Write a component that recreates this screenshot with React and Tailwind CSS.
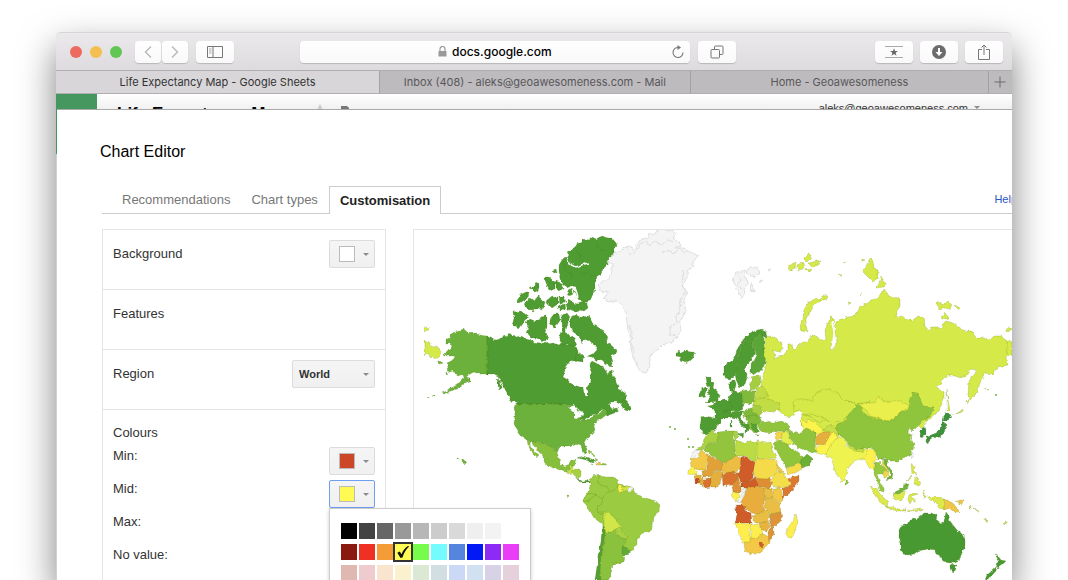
import { useState } from 'react';

const CANADA = '#4f9c32';
const USA = '#6cb13a';
const RUSSIA = '#d5e94a';
const NO_DATA = '#f4f4f4';

// Every entry is a fill colour followed by the outlines drawn with it
const landmasses = [
  // Alaska, Aleutians and Hawaii
  [USA,
    '487,336 480,335 476,334 472,333 467,332 465,330 462,328 460,331 455,332 451,335 449,338 446,340 446,343 449,343 452,346 450,350 446,351 444,354 447,356 453,356 454,359 450,361 447,363 449,366 447,369 449,372 453,371 455,374 458,376 463,374 464,378 460,382 457,385 451,388 447,391 442,393 444,394 450,391 457,389 463,384 467,382 470,381 470,378 466,377 470,374 474,372 479,374 487,374',
    '437,361 440,361 443,363 439,364', '446,372 448,373 446,375', '427,397 430,397 429,398', '432,396 436,396 435,397', '457,458 459,459 457,459', '461,460 463,459 466,462 464,464',
  ],
  // Canadian mainland
  [CANADA,
    '487,336 491,337 495,340 499,339 502,338 504,335 507,336 509,333 512,337 514,335 516,337 521,336 525,338 530,339 534,343 541,344 544,342 549,344 554,343 559,345 562,342 567,345 571,343 573,346 577,349 580,354 583,357 583,362 578,361 573,362 570,361 566,367 564,373 563,377 568,380 570,383 577,386 583,388 584,393 586,397 588,397 588,391 587,387 591,382 590,377 592,371 589,365 592,361 596,363 600,366 603,366 605,371 608,374 610,370 612,371 614,378 618,385 618,389 622,391 626,394 625,399 629,403 631,409 628,411 622,408 622,403 616,402 611,402 608,405 611,409 617,408 619,411 612,414 606,416 604,409 601,410 596,415 590,416 585,420 581,419 580,414 576,409 571,406 563,404 517,404 511,401 508,395 505,389 502,384 498,376 494,374 487,374',
    '622,401 626,401 630,406 631,411 626,409 621,407',
    // Baffin
    '572,316 576,315 580,317 588,316 592,319 594,325 598,327 601,330 606,333 608,338 606,342 611,345 613,347 617,350 615,355 612,354 611,360 613,366 607,365 602,361 596,360 592,357 588,356 594,353 597,350 596,346 591,343 587,339 584,340 582,344 580,337 576,334 572,331 570,325 570,320',
    '576,354 580,353 585,358 581,361 575,360',
    '562,315 567,313 570,317 568,323 566,330 567,334 574,338 577,344 574,347 568,344 562,345 559,338 562,330 561,322',
    // Ellesmere and Axel Heiberg
    '567,258 569,255 567,252 571,250 575,248 577,244 583,242 583,239 588,240 592,237 596,239 602,236 608,238 612,238 615,242 617,246 614,250 614,254 611,257 609,262 606,266 603,269 601,274 597,276 596,281 595,285 595,290 592,295 590,301 584,303 578,299 576,293 573,291 576,287 571,286 567,288 563,285 560,279 559,271 559,265 562,260 565,257',
    '566,304 568,300 573,303 578,304 583,302 587,303 588,308 584,311 579,310 574,312 567,309',
    '567,292 571,289 573,294 568,297', '556,281 561,283 563,289 558,291 556,287', '545,277 549,277 555,282 555,289 549,290 546,284',
    '530,289 534,286 535,283 538,282 538,288 536,292', '553,270 556,269 557,273 554,274',
    '517,301 520,295 526,292 529,292 528,297 523,301 520,303', '524,303 530,298 534,301 539,295 541,299 545,302 543,309 537,308 533,311 527,308 525,306',
    '546,301 552,296 558,297 558,304 552,308 548,304', '559,297 564,297 566,301 560,304', '558,306 564,304 565,310 560,311',
    '513,312 521,311 525,314 529,317 524,322 520,328 517,329 515,326 512,326 514,318',
    '525,323 530,319 535,321 539,320 541,317 547,316 547,326 545,333 549,337 546,341 541,340 536,338 531,338 528,335 526,332 529,329',
    '550,319 554,314 559,314 560,320 557,326 554,328 550,323',
    '497,378 500,381 502,388 499,390 498,385',
  ],
  [USA,
    '517,404 563,404 570,406 574,409 574,418 576,419 581,417 581,420 587,420 594,416 600,413 604,408 607,412 605,416 600,419 596,421 594,426 595,430 592,434 586,439 584,443 587,449 586,454 583,452 581,446 575,444 569,446 564,446 559,448 557,453 552,447 548,447 544,443 532,442 527,440 521,436 517,430 514,424 515,414 514,406',
  ],
  // Mexico and Central America
  ['#86bf3b',
    '527,440 532,442 544,443 548,447 552,447 557,453 559,458 560,464 565,466 570,464 571,461 576,460 574,466 571,467 569,472 561,470 553,468 546,464 543,461 543,456 538,451 534,446 531,442 530,445 534,451 539,456 537,458 531,451 528,445',
  ],
  ['#c9e046', '568,472 571,466 573,467 573,470 571,475 567,473'],
  ['#a6d043', '571,471 575,469 581,471 581,475 579,479 574,475'],
  [CANADA, '576,478 582,481 588,480 590,483 586,483 581,483', '578,458 583,456 589,458 596,461 593,463 586,460'],
  ['#8dc43e', '588,450 591,452 589,454', '591,452 595,456 593,457', '595,458 598,460 596,461', '590,465 593,465 592,466', '567,495 569,495 568,498', '603,463 607,465 601,465'],
  ['#edc545', '596,463 600,462 601,465 596,465'],
  // South America
  ['#9acb40',
    '590,481 593,476 599,474 601,476 606,477 613,477 617,480 619,484 625,485 632,488 635,494 641,496 643,498 650,499 656,501 660,505 659,511 654,517 653,525 650,532 643,533 637,538 637,544 631,552 624,555 622,562 612,566 611,572 608,580 600,580 602,524 594,518 589,509 584,502 584,498 588,492 590,486',
  ],
  ['#8ac13d', '604,530 607,532 613,531 619,537 625,540 626,543 622,549 624,556 623,562 614,563 612,569 610,572 611,576 608,580 598,580 600,565 603,550'],
  ['#d1e748', '604,513 609,512 612,516 617,519 618,524 622,526 621,530 615,529 612,532 606,532 604,526'],
  ['#a8d044', '616,529 621,528 624,534 628,537 626,541 622,537 617,535'],
  ['#62a936', '622,546 627,548 631,551 627,555 622,554'],
  ['#55a034', '602,524 604,527 605,533 603,546 601,558 600,571 601,580 595,580 597,566 598,555 601,542 602,532'],
  ['#fbef4c', '618,483 622,486 623,491 619,493 618,489'],
  ['#cfe548', '622,486 629,486 628,491 623,490'],
  // Greenland and Svalbard
  [NO_DATA,
    '598,285 602,282 606,280 611,276 612,270 612,264 607,262 611,256 618,252 626,247 631,246 633,250 637,244 639,241 645,238 648,239 648,235 655,233 656,231 663,229 669,231 673,230 676,234 673,238 679,242 681,246 675,248 683,248 688,252 692,252 698,256 693,262 693,267 687,271 687,278 683,284 687,293 684,301 686,311 682,318 679,322 681,330 678,335 673,341 664,344 657,351 651,354 649,359 650,366 646,373 642,372 637,366 633,356 631,349 630,337 627,323 626,312 622,304 616,300 609,302 604,298 608,292 600,291',
    '733,277 736,272 742,272 745,270 744,277 748,279 747,283 745,289 744,294 742,298 739,293 736,288 734,283', '746,270 751,267 757,268 760,272 755,277 751,276 747,273', '751,283 755,291 750,290', '767,270 771,269 769,271', '759,282 763,280 761,282',
    '690,459 695,450 701,450 700,453 697,454 693,459', '737,501 741,497 743,489 746,489 744,497 741,502', '629,487 632,489 630,492 628,491', '910,454 913,452 913,456 911,459',
  ],
  // Northern Europe
  [CANADA,
    '676,352 679,350 682,353 686,351 691,352 694,352 695,356 690,361 685,363 679,361 681,357 676,356',
    '724,366 729,362 733,360 735,357 737,350 741,343 746,336 753,332 760,329 766,332 767,337 762,336 758,335 752,343 745,340 741,348 738,357 736,367 735,375 730,380 726,379 724,374',
    '745,340 752,343 755,350 756,354 752,356 751,360 746,366 745,371 748,375 745,384 740,388 737,382 735,375 736,367 738,357 741,348',
    '729,386 730,382 735,380 736,385 734,392 730,391',
    '705,378 711,377 711,381 714,384 713,388 717,391 720,396 718,401 710,402 706,403 710,398 708,393 709,387 706,384',
    '699,394 701,389 706,387 707,391 705,397 699,398',
    '730,395 734,391 739,392 742,393 743,401 744,405 741,410 735,411 730,410 727,403',
    '708,406 713,405 715,402 720,402 724,398 730,403 733,408 731,413 734,416 729,418 724,418 720,421 715,418 715,411 711,408',
    '701,417 706,416 714,418 721,421 716,426 715,430 710,432 706,434 702,432 700,427 701,421',
    '731,417 732,412 737,411 743,411 742,415 740,417 745,423 752,427 749,428 748,432 745,433 745,428 740,423 736,418', '737,434 744,433 743,437', '730,420 732,421 732,427 730,427',
  ],
  ['#5ba637', '752,343 758,335 763,336 765,341 764,350 766,360 761,371 754,374 750,372 750,366 755,359 757,355 755,350'],
  // Russia and its northern islands
  [RUSSIA,
    '765,337 771,336 776,339 781,342 783,347 780,352 776,351 772,350 776,355 775,359 778,357 782,356 785,352 788,350 788,344 792,344 794,350 799,345 802,342 807,342 812,335 818,337 822,340 826,339 825,330 830,317 833,318 834,328 834,338 830,349 833,350 837,342 835,332 836,322 840,320 846,318 848,317 855,316 858,311 860,307 867,303 870,300 876,299 881,292 885,290 889,296 895,297 900,299 900,306 897,312 896,317 902,316 907,320 913,320 918,316 924,318 925,325 928,331 931,327 937,327 942,329 945,321 950,322 957,325 960,329 966,331 972,331 976,338 986,338 989,340 993,336 1001,336 1007,340 1012,343 1012,355 1006,357 1007,365 998,367 992,374 985,373 981,380 979,387 977,393 969,401 968,395 969,381 973,375 976,370 971,369 967,375 961,378 955,376 947,376 943,380 936,388 944,392 944,399 941,406 936,414 930,419 905,425 860,430 835,437 820,435 801,425 802,416 799,411 794,416 786,417 779,411 774,405 762,407 753,408 755,398 760,391 762,379 766,365 764,349 766,342',
    '424,328 428,327 429,330 424,331', '424,340 428,343 433,347 437,346 441,352 439,357 434,359 430,355 426,353 424,357',
    '801,331 800,326 803,318 804,310 808,303 812,300 818,299 824,296 828,295 827,299 821,301 814,304 811,310 807,317 805,324 808,332',
    '788,266 793,264 796,262 795,268 790,270', '797,265 803,262 805,265 803,269 798,270', '804,258 809,253 811,258 807,262', '808,263 813,262 821,260 818,265 812,267', '804,270 812,269 810,272',
    '863,272 866,266 871,258 874,264 873,269 878,271 878,278 873,282 867,276', '877,288 881,276 886,284 883,287',
    '936,303 940,301 942,305 948,301 952,305 950,309 945,308 940,310', '953,305 961,308 957,310', '942,317 945,313 949,318 945,319',
    '1006,328 1010,327 1012,329 1008,332', '843,262 846,261 845,263', '839,274 842,275 840,276', '862,259 865,260 862,261', '848,302 851,303 849,304', '859,294 862,293 860,295',
    '947,389 948,401 950,410 947,411 947,400', '952,416 959,412 963,409 961,412', '967,402 969,400 968,404', '983,387 988,390 985,389',
  ],
  // Eastern Europe
  ['#7fba3b', '739,392 746,390 755,391 754,402 749,405 743,403 742,395', '743,411 751,408 757,409 759,415 762,421 757,425 758,431 754,433 749,427 748,421 744,416'],
  ['#a5cd42', '750,386 752,380 751,377 759,375 761,382 757,389 751,390', '753,404 762,406 763,412 759,416 752,412'],
  ['#c2dc45', '756,389 762,386 766,389 768,396 764,398 755,398', '755,400 763,398 772,400 780,404 779,410 771,412 764,411 759,406 753,405'],
  ['#57a335', '751,424 757,424 756,427 760,431 756,433 753,429', '755,435 760,435 757,436'],
  // Central Asia
  [RUSSIA, '793,402 797,399 804,399 813,401 815,393 824,389 831,390 838,394 845,401 856,403 861,408 850,414 846,418 836,422 828,420 818,422 811,417 804,415 799,409 794,411'],
  ['#fdf34e', '801,419 807,422 809,419 817,424 824,431 821,435 812,433 803,431', '816,447 825,443 830,432 838,433 835,442 829,448 826,455 816,453'],
  ['#e5af3d', '815,437 820,432 827,432 832,430 829,437 825,444 816,445'],
  ['#c8df48', '822,430 829,425 837,428 838,434 830,432'],
  // Middle East
  ['#91c43d', '757,425 763,421 772,423 783,421 789,425 788,431 779,431 772,433 762,432', '788,429 793,432 800,434 806,429 815,432 815,441 816,452 810,453 803,449 797,447 790,438', '773,443 780,440 785,442 792,449 799,452 804,458 808,455 813,459 806,466 798,469 790,466 786,468 780,457'],
  ['#6db038', '803,458 807,454 813,459 808,466 802,468 799,464'],
  ['#f3d448', '775,433 783,431 781,438 776,441'],
  ['#e6ee4c', '783,432 788,431 790,438 794,445 786,444 781,439'],
  ['#f7dc49', '786,468 793,466 800,463 802,469 797,472 788,475'],
  // East and South Asia
  ['#e9ef4d', '858,404 865,404 869,402 874,403 878,397 884,401 893,402 899,401 909,405 906,409 899,413 897,417 887,421 870,416 866,410'],
  ['#8fc43d', '836,425 842,422 846,421 846,416 850,413 857,405 862,408 863,413 870,417 887,421 897,417 900,412 908,410 910,404 909,401 912,393 918,394 923,406 934,407 930,417 922,420 918,426 913,431 909,427 908,433 913,435 911,439 914,444 913,450 910,455 903,458 898,461 890,461 885,458 878,459 875,452 872,447 865,449 856,449 847,444 845,439 839,435'],
  ['#eef34f', '832,444 838,436 845,440 846,446 857,451 865,450 868,447 867,453 863,460 857,459 849,467 846,473 845,480 841,482 836,473 833,464 832,458 827,457 826,452'],
  ['#c5de46', '846,444 857,449 864,449 863,452 854,451'],
  ['#8fc43d', '846,479 849,482 846,486'],
  ['#fdf04e', '867,452 871,447 875,453 876,459 873,463 875,470 870,469 866,462 864,458'],
  ['#97c93f', '874,463 878,461 882,465 887,467 886,473 881,474 877,474 880,483 884,488 884,492 879,490 877,481 874,473'],
  ['#74b23a', '881,458 889,460 888,465 893,473 892,478 886,481 891,474 888,468 884,463', '893,493 899,490 904,485 909,484 907,489 902,491 898,494'],
  ['#ecd94a', '883,472 888,471 889,476 884,478', '881,460 886,465 889,472 885,469'],
  ['#3f913d', '921,430 924,427 926,433 923,437 920,436', '946,412 952,417 948,420 943,421 944,416', '944,422 946,426 944,433 940,437 932,438 928,441 926,436 931,435 936,433 941,429 942,424', '926,439 929,440 928,444 926,442'],
  [RUSSIA, '918,426 922,421 928,418 925,425 922,428'],
  ['#dde84b',
    '870,486 876,488 880,494 884,498 888,502 887,507 882,504 877,497', '886,507 893,507 898,509 905,509 906,511 898,511 889,509', '908,510 921,508 920,510 911,511',
    '893,494 899,494 903,491 906,491 905,496 901,501 895,500', '909,495 912,493 918,494 912,496 914,499 916,503 912,500 910,504 908,499', '923,491 925,495 924,498', '927,496 932,497 938,498 944,499 944,510 939,508 936,502 930,500', '919,511 923,509 922,511',
    '911,464 915,466 914,472 917,476 912,473', '915,478 918,477 921,484 918,486 914,484', '906,481 911,476 909,480',
  ],
  ['#efc546', '944,499 949,501 954,504 956,508 961,512 955,512 950,508 944,510', '955,502 963,499 964,502 960,505'],
  ['#c6dc48', '969,505 972,508 970,508', '973,508 979,512 976,511', '985,518 988,521 986,522', '1003,524 1007,521 1007,525'],
  // Oceania
  ['#4a9930',
    '899,530 902,525 909,522 912,518 917,519 921,516 924,513 932,513 937,515 936,520 941,524 944,522 946,512 949,516 950,521 953,525 957,530 962,534 965,540 965,546 962,553 959,560 955,562 950,563 943,561 939,555 936,554 935,550 928,549 918,551 914,554 908,555 903,554 901,549 901,543 899,537',
    '950,564 957,565 955,571 952,573 950,568', '995,554 998,556 1001,560 1006,561 1002,565 998,568 996,564 999,561', '997,566 996,571 991,576 988,580 985,580 987,575 993,570',
  ],
  // North Africa
  ['#a9d142', '708,433 712,431 718,433 720,437 718,441 712,443 705,446 702,450 696,450 702,446 704,439'],
  ['#92c53e', '718,432 728,431 734,431 733,438 735,444 735,453 738,457 724,464 703,449 707,445 716,442 719,438'],
  ['#a9d142', '733,431 737,431 738,438 735,441'],
  ['#bbdb45', '736,440 744,443 748,441 757,443 756,462 743,456 738,456 735,451'],
  ['#cfe347', '757,440 765,442 771,441 773,449 771,448 777,458 757,459'],
  // West Africa
  ['#f3ca47', '690,459 697,458 701,450 707,454 706,470 699,470 691,467'],
  ['#e2a039', '707,454 711,456 723,463 723,470 714,472 709,477 703,477 702,471 707,470'],
  ['#edbc42', '724,464 737,455 741,459 740,469 735,473 724,473 721,469'],
  ['#fdf24e', '688,470 694,467 697,472 697,475 688,474'],
  ['#e5af3e', '693,476 700,475 704,480 703,486 698,482', '711,474 719,471 723,472 720,484 716,487 711,487 710,481'],
  ['#c9472a', '694,480 698,478 700,482 697,484'],
  ['#d8722f', '703,479 711,478 711,487 704,488', '722,474 730,472 739,473 738,480 733,485 723,486'],
  // Central Africa
  ['#d05b2a', '741,456 755,462 753,477 748,482 741,483 738,476 740,470', '741,483 749,481 754,477 759,486 751,488 741,488', '735,505 744,505 746,511 751,513 752,523 735,523 737,514'],
  ['#de8e36', '738,477 741,487 741,492 733,492 732,487', '754,479 760,478 769,475 772,484 769,488 759,487'],
  ['#f5db4a', '757,459 776,459 778,466 774,475 767,479 755,478 753,470'],
  ['#fdf14d', '731,494 737,491 740,496 736,501 732,498'],
  ['#e8ad3e', '746,488 758,486 764,489 765,497 763,502 765,511 760,515 752,513 744,507 741,502 745,495'],
  // East and southern Africa
  ['#f3dd4a', '771,480 776,472 784,473 787,480 793,482 787,487 779,488 773,486'],
  ['#f3c846', '777,464 783,472 778,473', '773,488 781,488 783,500 780,503 773,498', '744,541 749,541 751,537 756,538 762,533 769,537 769,543 760,553 749,554 745,552'],
  ['#db7932', '787,479 799,475 799,481 791,492 783,499 783,489 792,484'],
  ['#e9be43', '764,488 772,488 773,498 765,499', '764,499 773,498 780,504 781,512 771,514 765,508', '752,516 763,512 768,510 770,516 764,523 755,523'],
  ['#de9338', '770,514 781,512 782,520 774,527 774,535 769,541 768,532 771,526 769,519'],
  ['#e7b241', '759,524 768,520 770,526 767,531 761,530'],
  ['#fdee4d', '735,523 752,524 750,528 750,542 742,542 739,533', '751,525 758,524 763,533 757,538 751,538', '787,529 793,521 796,514 798,521 793,536 788,538 786,533'],
  ['#d05b2a', '759,544 762,542 764,545 761,547'],
];

// Lakes and inland seas are cut out of the land
const water = [
  '763,414 765,411 770,412 773,413 777,410 782,414 783,418 775,420 765,421 762,418',
  '794,413 799,410 802,413 799,417 801,420 800,426 804,430 797,430 797,422 794,417',
  '569,408 574,405 578,409 573,411', '574,412 577,411 576,420 574,419', '578,410 584,412 583,416 580,415',
  '794,446 803,451 806,454 802,456 797,452',
];

const innerBorders = [
  '584,502 590,499 597,495 602,499 602,504 597,507 598,513 604,513',
  '599,475 598,483 608,488 610,493 617,487 620,484',
  '602,499 608,493 610,493', '585,497 590,493 597,495',
  '846,400 856,404 870,402', '803,415 811,414 820,417 830,421', '724,412 730,411', '745,418 752,416 758,417',
  '1007,340 1007,354', '563,263 566,271 572,275 570,281', '576,250 581,255 580,259', '596,243 599,249 605,251', '580,275 588,272 592,277',
];

const channels = ['567,258 569,263 576,267 584,264 589,263', '567,296 573,297 576,302', '832,322 834,332 833,343', '570,287 576,290 578,297'];

function WorldMap() {
  return (
    <svg viewBox="414 230 598 350" preserveAspectRatio="xMinYMin slice" className="block w-full" role="img" aria-label="World">
      {/* roughens the coastlines */}
      <filter id="coast" x="0" y="0" width="100%" height="100%">
        <feTurbulence type="fractalNoise" baseFrequency="0.22" numOctaves="2" seed="4" />
        <feDisplacementMap in="SourceGraphic" scale="4" xChannelSelector="R" yChannelSelector="G" />
      </filter>
      <g filter="url(#coast)">
        <g strokeWidth="1" strokeLinejoin="round">
          {landmasses.map(([fill, ...shapes], i) => (
            <g key={i} fill={fill} stroke={fill === NO_DATA ? '#dedede' : '#4a6a00'} strokeOpacity={fill === NO_DATA ? 1 : 0.18}>
              {shapes.map((points) => <polygon key={points} points={points} />)}
            </g>
          ))}
        </g>
        <g fill="#fff">
          {water.map((points) => <polygon key={points} points={points} />)}
        </g>
        <g fill="none" stroke="#4a6a00" strokeOpacity="0.22">
          {innerBorders.map((points) => <polyline key={points} points={points} />)}
        </g>
        <g fill="none" stroke="#fff" strokeWidth="1.5">
          {channels.map((points) => <polyline key={points} points={points} />)}
        </g>
        <g fill="none" stroke="#dedede">
          <polyline points="638,250 640,244 646,241 650,246 654,241 661,245 668,240 673,242" />
          <polyline points="663,253 668,250 673,254 679,249 685,253" />
          <polyline points="627,247 630,254 635,253 638,248" />
          <polyline points="629,325 632,332 631,342 634,352" />
          <polyline points="684,270 682,282 685,290 681,300 680,310 676,316 677,323 671,326 670,334 676,336" />
          <polyline points="737,274 741,280 738,286 743,289" />
        </g>
      </g>
      <g fill="#6cb13a">
        <circle cx="670" cy="427" r="1" /><circle cx="675" cy="429" r="1" />
        <circle cx="688" cy="439" r="1" /><circle cx="689" cy="447" r="1" />
        <circle cx="693" cy="447" r="1" /><circle cx="996" cy="395" r="1" />
      </g>
    </svg>
  );
}

const palette = [
  ['#000000', '#434343', '#666666', '#999999', '#b7b7b7', '#cccccc', '#d9d9d9', '#efefef', '#f3f3f3', '#ffffff'],
  ['#8a1a10', '#ee3124', '#f39c38', '#fffb54', '#77fb4c', '#74fbfd', '#5586dd', '#0019f5', '#8d2af5', '#ea3df7'],
  ['#dfb9b1', '#eecccd', '#f9e4d0', '#fcf1cf', '#dbe8d4', '#d2dfe2', '#cbd9f6', '#d2e1f1', '#d8d2e7', '#e5d1db'],
];

function Arrow({ className = '' }) {
  return <span className={`border-x-3 border-t-3 border-x-transparent border-t-[#8c8c8c] ${className}`} />;
}

function ColorMenu({ value, onPick }) {
  return (
    <div className="absolute top-full left-0 z-10 flex flex-col gap-[5px] border border-[#ccc] bg-white px-[11px] pt-[14px] pb-4 shadow-[0_2px_4px_rgba(0,0,0,0.2)]">
      {palette.map((row, i) => (
        <div key={i} className="flex gap-[2px]">
          {row.map((color) => (
            <button
              key={color}
              type="button"
              aria-label={color}
              onClick={() => onPick(color)}
              className={`flex size-4 items-center justify-center ${color === value ? 'outline-2 outline-[#333]' : ''}`}
              style={{ backgroundColor: color }}
            >
              {color === value && (
                <svg viewBox="0 0 12 12" className="size-3" fill="#111">
                  <path d="M0.300 6.800 2.800 5.600 4.500 8.200C5.800 4.800 8 1.800 11 0 11.800 0 12 0.500 11.600 1 9 3.500 6.900 7 5.500 11.400L3.500 12Z" />
                </svg>
              )}
            </button>
          ))}
        </div>
      ))}
    </div>
  );
}

function ColorButton({ id, color, open, onClick, children }) {
  return (
    <div className="relative">
      <button
        id={id}
        type="button"
        onClick={onClick}
        className={`flex h-7 w-[46px] items-center justify-between rounded-xs border bg-linear-to-b from-[#f5f5f5] to-[#f0f0f0] pr-[5px] pl-[9px] ${open ? 'border-[#6f9ff0]' : 'border-[#dcdcdc]'}`}
      >
        <span className="size-4 border border-[#bbb]" style={{ backgroundColor: color }} />
        <Arrow />
      </button>
      {children}
    </div>
  );
}

function ToolButton({ label, className = 'w-[38px]', children }) {
  return (
    <button type="button" aria-label={label} className={`flex h-[22px] items-center justify-center rounded bg-linear-to-b from-white to-[#f9f9f9] text-[#777] shadow-[0_1px_1px_rgba(0,0,0,0.18)] ${className}`}>
      {children}
    </button>
  );
}

function Toolbar() {
  return (
    <div className="flex h-[38px] items-center rounded-t-[5px] border-t border-[#d6d6d6] bg-linear-to-b from-[#ebe9eb] to-[#dddbde] pr-[9px] pl-[14px]">
      <div className="flex gap-2">
        <span className="size-3 rounded-full bg-[#ed6a5e]" />
        <span className="size-3 rounded-full bg-[#f5bf4f]" />
        <span className="size-3 rounded-full bg-[#62c655]" />
      </div>
      <div className="ml-[13px] flex gap-px">
        <ToolButton label="Back" className="w-[26px]">
          <svg viewBox="0 0 8 12" className="h-3 w-2" fill="none" stroke="#b8b8b8" strokeWidth="1.4"><path d="M7 0.5 1.5 6 7 11.5" /></svg>
        </ToolButton>
        <ToolButton label="Forward" className="w-[26px]">
          <svg viewBox="0 0 8 12" className="h-3 w-2" fill="none" stroke="#b8b8b8" strokeWidth="1.4"><path d="M1 0.5 6.5 6 1 11.5" /></svg>
        </ToolButton>
      </div>
      <div className="ml-2 flex">
        <ToolButton label="Sidebar">
          <svg viewBox="0 0 16 12" className="h-3 w-4" fill="none" stroke="currentColor">
            <path d="M0.5 0.5h15v11h-15zM6 0.5v11" />
            <path d="M2 3h2.5M2 5h2.5M2 7h2.5" strokeOpacity="0.6" />
          </svg>
        </ToolButton>
      </div>
      <div className="mr-2 ml-[66px] flex h-[22px] flex-1 items-center rounded bg-linear-to-b from-white to-[#f9f9f9] px-[6px] shadow-[0_1px_1px_rgba(0,0,0,0.18)]">
        <div className="ml-5 flex flex-1 items-center justify-center gap-[5px]">
          <svg viewBox="0 0 9 11" className="h-[11px] w-[9px]" fill="none" stroke="#999" strokeWidth="1.2">
            <path d="M2 5V3a2.5 2.5 0 0 1 5 0v2" />
            <rect x="0.5" y="5" width="8" height="5.5" rx="0.5" fill="#999" stroke="none" />
          </svg>
          <input aria-label="Address" defaultValue="docs.google.com" className="w-[108px] text-[12px] font-medium text-black outline-none" />
        </div>
        <button type="button" aria-label="Reload">
          <svg viewBox="0 0 12 14" className="h-[14px] w-3" fill="none" stroke="#777" strokeWidth="1.1">
            <path d="M6.5 2.5A5 5 0 1 0 11 7.5" />
            <path d="M5.5 0 9 2.6 5.5 5Z" fill="#777" stroke="none" />
          </svg>
        </button>
      </div>
      <ToolButton label="Show all tabs">
        <svg viewBox="0 0 14 14" className="size-[14px]" fill="none" stroke="currentColor">
          <rect x="1" y="4.5" width="8.5" height="8.5" rx="1" />
          <path d="M4.500 4.500V2a1 1 0 0 1 1-1H12a1 1 0 0 1 1 1v6.500a1 1 0 0 1-1 1H9.500" />
        </svg>
      </ToolButton>
      <div className="ml-[139px] flex gap-[7px]">
        <ToolButton label="Bookmarks">
          <svg viewBox="0 0 18 14" className="h-[14px] w-[18px]">
            <path d="M0 1.500h18M0 12.500h18" stroke="#aaa" />
            <path d="m9 3.200 1 2.800h3l-2.400 1.800.9 2.900L9 9l-2.500 1.700.9-2.900L5 6h3z" fill="#666" />
          </svg>
        </ToolButton>
        <ToolButton label="Downloads">
          <svg viewBox="0 0 14 14" className="size-[14px]">
            <circle cx="7" cy="7" r="7" fill="#6c6c6c" />
            <path d="M6 3h2v4h2.500L7 11 3.500 7H6z" fill="#fff" />
          </svg>
        </ToolButton>
        <ToolButton label="Share">
          <svg viewBox="0 0 12 16" className="h-4 w-3" fill="none" stroke="currentColor">
            <path d="M4 5.500H0.500v10h11v-10H8M6 11V1M3.500 3.500 6 1l2.500 2.500" />
          </svg>
        </ToolButton>
      </div>
    </div>
  );
}

function BrowserTabs() {
  return (
    <div className="grid h-6 grid-cols-[26fr_25fr_24fr_24px] border-y border-[#b0aeb1] bg-[#bdbbbe] text-[11px] text-[#59575a]">
      <button type="button" className="bg-[#d8d6d9] text-[#333]">Life Expectancy Map - Google Sheets</button>
      <button type="button" className="border-l border-[#a3a1a4]">Inbox (408) - aleks@geoawesomeness.com - Mail</button>
      <button type="button" className="border-l border-[#a3a1a4]">Home - Geoawesomeness</button>
      <button type="button" aria-label="New tab" className="flex items-center justify-center border-l border-[#a3a1a4]">
        <svg viewBox="0 0 12 12" className="size-3" stroke="#6c6c6c"><path d="M6 0.500v11M0.500 6h11" /></svg>
      </button>
    </div>
  );
}

function ChartEditor() {
  const [colors, setColors] = useState({ min: '#cb4727', mid: '#fffb54', max: '#109618', none: '#f5f5f5' });
  const [openMenu, setOpenMenu] = useState('mid');

  const rows = [
    { key: 'min', label: 'Min:' },
    { key: 'mid', label: 'Mid:' },
    { key: 'max', label: 'Max:' },
    { key: 'none', label: 'No value:' },
  ];

  return (
    <div className="h-full overflow-hidden border-t border-[#aaa] bg-white pt-8 pl-[43px] text-[13px] text-[#333]">
      <h1 className="text-base leading-5 text-black">Chart Editor</h1>

      {/* Editor tabs */}
      <div className="mt-6 ml-[2px] flex h-[28px] items-end gap-px border-b border-[#ccc] pl-[10px]">
        <button type="button" className="h-[27px] px-[10px] text-[#777]">Recommendations</button>
        <button type="button" className="h-[27px] px-[10px] text-[#777]">Chart types</button>
        <button type="button" className="-mb-px h-[28px] border border-b-0 border-[#ccc] bg-white px-[10px] font-bold text-[#222]">Customisation</button>
        <a href="#help" className="-mr-[5px] ml-auto self-center text-[11px] text-[#2a56c6]">Help</a>
      </div>

      <div className="mt-[15px] ml-[2px] flex items-start gap-[27px]">
        <div className="w-[284px] shrink-0 border border-[#e5e5e5]">
          <div className="flex h-[60px] justify-between border-b border-[#e5e5e5] px-[10px] pt-[10px]">
            <label htmlFor="background" className="leading-7">Background</label>
            <ColorButton id="background" color="#ffffff" />
          </div>
          <div className="h-[60px] border-b border-[#e5e5e5] px-[10px] pt-[10px]">
            <h2 className="leading-7">Features</h2>
          </div>
          <div className="flex h-[60px] justify-between border-b border-[#e5e5e5] px-[10px] pt-[10px]">
            <label htmlFor="region" className="leading-7">Region</label>
            <div className="relative">
              <select id="region" className="h-7 w-[83px] appearance-none rounded-xs border border-[#dcdcdc] bg-linear-to-b from-[#f5f5f5] to-[#f0f0f0] px-[6px] text-[11px] font-bold text-[#333]">
                <option>World</option>
                <option>Africa</option>
                <option>Europe</option>
              </select>
              <Arrow className="pointer-events-none absolute top-[13px] right-[6px]" />
            </div>
          </div>
          <div className="px-[10px] pt-[13px] pb-10">
            <h2 className="leading-5">Colours</h2>
            <div className="mt-1 flex flex-col gap-[5px]">
              {rows.map(({ key, label }) => (
                <div key={key} className="flex items-start justify-between">
                  <label htmlFor={key} className="leading-[18px]">{label}</label>
                  <ColorButton
                    id={key}
                    color={colors[key]}
                    open={openMenu === key}
                    onClick={() => setOpenMenu(openMenu === key ? null : key)}
                  >
                    {openMenu === key && (
                      <ColorMenu
                        value={colors[key]}
                        onPick={(color) => setColors({ ...colors, [key]: color })}
                      />
                    )}
                  </ColorButton>
                </div>
              ))}
            </div>
          </div>
        </div>

        {/* Chart preview */}
        <div className="min-w-0 flex-1 border-t border-l border-[#e5e5e5]">
          <WorldMap />
        </div>
      </div>
    </div>
  );
}

export default function App() {
  return (
    <div className="h-screen overflow-hidden bg-white px-14 pt-8 font-['Liberation_Sans',Arial,sans-serif]">
      <div className="flex h-full flex-col rounded-t-[5px] shadow-[0_16px_36px_rgba(0,0,0,0.5)]">
        <div className="font-[Inter,sans-serif]">
          <Toolbar />
          <BrowserTabs />
        </div>
        {/* Spreadsheet header, mostly hidden under the editor */}
        <div className="flex h-[15px] shrink-0 items-start overflow-hidden bg-linear-to-b from-white to-[#f1f1f1]">
          <div className="h-full w-[41px] bg-[#45975f]" />
          <p className="ml-5 pt-[10px] text-[17px] leading-5 font-bold text-black">Life Expectancy Map</p>
          <svg viewBox="0 0 40 8" className="mt-2 ml-6 h-2 w-10"><path d="m11 2 3 6H8z" fill="#ccc" /><path d="M32 4h6l2 2v2h-8z" fill="#777" /></svg>
          <p className="mr-[6px] ml-auto pt-2 text-[11px] leading-3 text-[#333]">aleks@geoawesomeness.com</p>
          <Arrow className="mt-3 mr-8" />
        </div>
        {/* The green page edge shows beside the editor */}
        <div className="min-h-0 flex-1 bg-[linear-gradient(#45975f_45px,#d0d0d0_45px)] pl-px">
          <ChartEditor />
        </div>
      </div>
    </div>
  );
}
